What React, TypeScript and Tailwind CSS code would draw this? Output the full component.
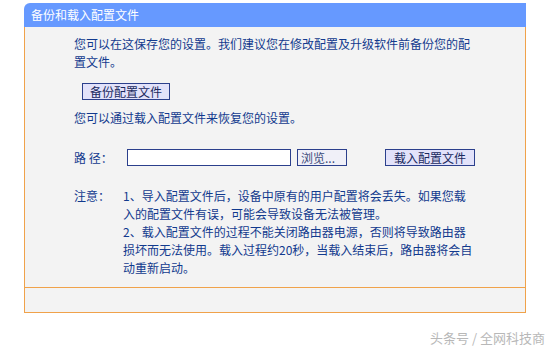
const FONT = { fontFamily: '"Noto Sans CJK SC", "Noto Sans", sans-serif' };

export default function App() {
  return (
    <div className="w-[552px] h-[349px] bg-white pt-[3px] pl-[24px] overflow-hidden" style={FONT}>
      <div className="w-[502px]">
        {/* title bar */}
        <div className="h-[24px] bg-[#6699ff] rounded-tl-[6px] pl-[7px] text-[12px] leading-[24px] text-white">
          备份和载入配置文件
        </div>

        <div className="border-x border-b border-[#f0a24a] bg-[#f3f3f3]">
          {/* body */}
          <div className="pl-[49px] pt-[8px] pb-[10px] text-[12px] leading-[18px] text-[#123a8e]">
            <p className="w-[400px]">
              您可以在这保存您的设置。我们建议您在修改配置及升级软件前备份您的配置文件。
            </p>

            <button className="ml-[8px] mt-[12px] block h-[17px] w-[88px] border border-[#2b3f8c] bg-[#e2e2fa] text-[12px] leading-[15px] text-[#1a2a5e]">
              备份配置文件
            </button>

            <p className="mt-[9px]">您可以通过载入配置文件来恢复您的设置。</p>

            <div className="mt-[22px] flex h-[17px] items-center">
              <span className="w-[53px]">路 径：</span>
              <div className="h-[17px] w-[164px] border border-[#2b3f8c] bg-white" />
              <button className="ml-[6px] h-[17px] w-[50px] border border-[#2b3f8c] bg-[#f0f0f8] pl-[3px] text-left text-[12px] leading-[15px] text-[#3a4a7a]">
                浏览...
              </button>
              <button className="ml-[38px] h-[17px] w-[90px] border border-[#2b3f8c] bg-[#e2e2fa] text-[12px] leading-[15px] text-[#1a2a5e]">
                载入配置文件
              </button>
            </div>

            <div className="mt-[21px] flex">
              <span className="w-[49px] shrink-0">注意：</span>
              <div className="w-[352px]">
                <p>1、导入配置文件后，设备中原有的用户配置将会丢失。如果您载入的配置文件有误，可能会导致设备无法被管理。</p>
                <p>2、载入配置文件的过程不能关闭路由器电源，否则将导致路由器损坏而无法使用。载入过程约20秒，当载入结束后，路由器将会自动重新启动。</p>
              </div>
            </div>
          </div>

          {/* footer */}
          <div className="h-[25px] border-t border-[#f0a24a]" />
        </div>
      </div>

      <div className="mt-[17px] flex w-[521px] justify-end text-[13px] leading-[16px] text-[#b8b8b8]">
        头条号 / 全网科技商
      </div>
    </div>
  );
}
